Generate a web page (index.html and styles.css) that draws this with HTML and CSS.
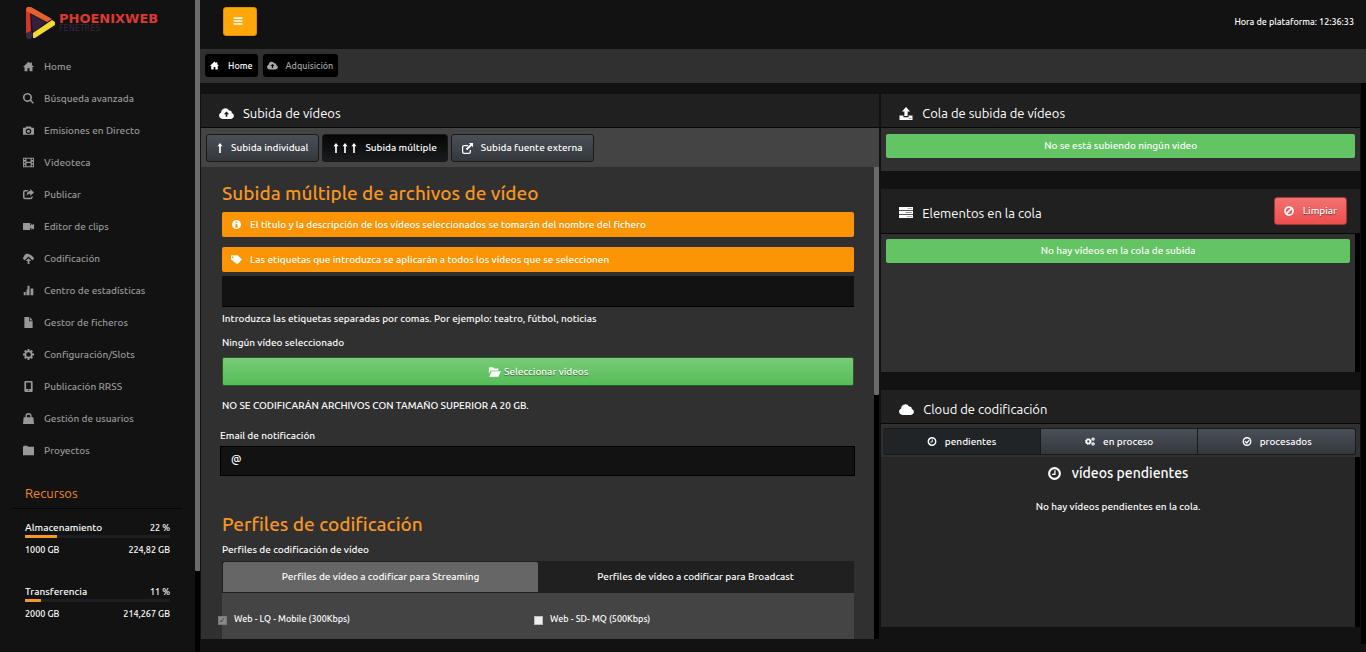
FILE: index.html
```html
<!DOCTYPE html>
<html lang="es">
<head>
<meta charset="utf-8">
<title>PhoenixWeb</title>
<link rel="stylesheet" href="styles.css">
</head>
<body>
<svg class="sprite" aria-hidden="true">
  <symbol id="i-home" viewBox="0 0 16 16"><path d="M8 1 0 8.600h2.200V15h4.300v-4.500h3V15h4.300V8.600H16L13 5.700V2h-2v1.800z"/></symbol>
  <symbol id="i-search" viewBox="0 0 16 16"><path fill-rule="evenodd" d="M6.500 0a6.500 6.500 0 1 0 3.800 11.700l4 4 1.600-1.700-3.900-4A6.500 6.500 0 0 0 6.500 0zm0 2.300a4.200 4.200 0 1 1 0 8.400 4.200 4.200 0 0 1 0-8.400z"/></symbol>
  <symbol id="i-camera" viewBox="0 0 16 16"><path fill-rule="evenodd" d="M4.500 2h7l1 2H16v10H0V4h3.500zM8 5a4 4 0 1 0 0 8 4 4 0 0 0 0-8zm0 1.800a2.200 2.200 0 1 1 0 4.400 2.200 2.200 0 0 1 0-4.400z"/></symbol>
  <symbol id="i-film" viewBox="0 0 16 16"><path fill-rule="evenodd" d="M0 1h16v14H0zM1.300 2.500v2h2v-2zm0 4.300v2.400h2V6.800zm0 4.600v2.100h2v-2.100zM5 2.500V7h6V2.500zm0 6.300v4.700h6V8.800zm7.700-6.300v2h2v-2zm0 4.300v2.400h2V6.800zm0 4.600v2.100h2v-2.100z"/></symbol>
  <symbol id="i-share" viewBox="0 0 16 16"><path d="M8 1.500H3A3 3 0 0 0 0 4.500V12a3 3 0 0 0 3 3h8a3 3 0 0 0 3-3v-2l-2.200 1.500v.6c0 .5-.3.800-.8.800H3c-.5 0-.8-.3-.8-.8V4.500c0-.5.300-.8.800-.8h3z"/><path d="M10.500 0 16 5l-5.500 5V7C8 7 6.500 8 5.300 10 5 5.500 7.500 3 10.500 3z"/></symbol>
  <symbol id="i-video" viewBox="0 0 16 16"><path d="M0 3h10.500v3.500L12 6V4h1.500V6L16 4v8.500L13.500 11v1.500H12V10l-1.500-.5V13H0z"/></symbol>
  <symbol id="i-cloudup" viewBox="0 0 16 16"><path d="M2.500 10.500A3 3 0 0 1 1.500 5 5 5 0 0 1 10 2.500 4 4 0 0 1 13.500 5a2.800 2.800 0 0 1 0 5.500L8 5z"/><path d="m8 7.500 4 4.300H9.300V16H6.700v-4.200H4z"/></symbol>
  <symbol id="i-chart" viewBox="0 0 16 16"><path d="M1 10h3v5H1zM5 7h1.500v8H5zM6.500 1h3v14h-3zM11 5h4v10h-4z"/></symbol>
  <symbol id="i-file" viewBox="0 0 16 16"><path d="M2 0h7v6h5v10H2z"/><path d="M10 0v5h4z"/></symbol>
  <symbol id="i-cog" viewBox="0 0 16 16"><path fill-rule="evenodd" d="m6.700 0-.4 2.200-1 .4-1.900-1.300L1.600 3.100l1.300 1.900-.4 1L0 6.700v2.600l2.400.4.500 1-1.400 2 1.900 1.800 1.900-1.300 1 .4.400 2.400h2.600l.4-2.400 1-.4 2 1.300 1.800-1.800-1.400-2 .5-1 2.400-.4V6.700L13.500 6l-.4-1 1.300-1.900-1.800-1.800-2 1.300-1-.4L9.300 0zM8 4.600a3.400 3.400 0 1 1 0 6.800 3.400 3.400 0 0 1 0-6.800z"/></symbol>
  <symbol id="i-mobile" viewBox="0 0 16 16"><path fill-rule="evenodd" d="M3.500 0h9A1.500 1.500 0 0 1 14 1.500v13a1.500 1.500 0 0 1-1.500 1.500h-9A1.500 1.500 0 0 1 2 14.500v-13A1.500 1.500 0 0 1 3.500 0zM4.500 2v9.500h7V2zM7 12.700v1.600h2v-1.600z"/></symbol>
  <symbol id="i-bag" viewBox="0 0 16 16"><path fill-rule="evenodd" d="M1 6h2.500V4.500a4.500 4.500 0 0 1 9 0V6H15l1 10H0zm4.500 0h5V4.500a2.500 2.500 0 0 0-5 0z"/></symbol>
  <symbol id="i-folder" viewBox="0 0 16 16"><path d="M0 2.500 1.500 1H6l1.500 1.500H16V15H0z"/></symbol>
  <symbol id="i-bars" viewBox="0 0 16 16"><path d="M1 2h14v2.600H1zM1 6.700h14v2.600H1zM1 11.400h14V14H1z"/></symbol>
  <symbol id="i-upcloud" viewBox="0 0 18 14"><path fill-rule="evenodd" d="M4 13.500A4 4 0 0 1 2.600 5.800 5 5 0 0 1 12 3.500a3 3 0 0 1 3.400 3A3.600 3.600 0 0 1 14.500 13.500zM9 4.500 5.800 8h2.200v3h2V8h2.200z"/></symbol>
  <symbol id="i-cloud" viewBox="0 0 18 14"><path d="M4 13.500A4 4 0 0 1 2.600 5.800 5 5 0 0 1 12 3.500a3 3 0 0 1 3.400 3A3.600 3.600 0 0 1 14.500 13.500z"/></symbol>
  <symbol id="i-up" viewBox="0 0 6 12"><path d="m3 0 3 4H4v8H2V4H0z"/></symbol>
  <symbol id="i-ext" viewBox="0 0 16 16"><path d="M9 3H3a3 3 0 0 0-3 3v7a3 3 0 0 0 3 3h7a3 3 0 0 0 3-3v-3h-1.800v3c0 .7-.5 1.200-1.200 1.200H3c-.7 0-1.200-.5-1.200-1.200V6c0-.7.500-1.200 1.200-1.200h6z"/><path d="M10 0h6v6l-2-2-6.500 6.500-2-2L12 2z"/></symbol>
  <symbol id="i-info" viewBox="0 0 16 16"><path fill-rule="evenodd" d="M8 0a8 8 0 1 1 0 16A8 8 0 0 1 8 0zM6.500 2.700v2.300h3V2.700zM5.500 6.500v1.700h1v3.300h-1v1.700h5v-1.700h-1v-5z"/></symbol>
  <symbol id="i-tags" viewBox="0 0 18 14"><path fill-rule="evenodd" d="M0 1.500A1.500 1.500 0 0 1 1.500 0H11l7 7-6.500 7H9L0 7zM3 1.600a1.400 1.400 0 1 0 0 2.800 1.400 1.400 0 0 0 0-2.800z"/></symbol>
  <symbol id="i-open" viewBox="0 0 18 14"><path d="M1 9V2l1-1.500h5L8 2h6.500v3H4z"/><path d="M5 6h13l-3.500 7.500h-13z"/></symbol>
  <symbol id="i-upload" viewBox="0 0 16 16"><path d="m8 0 5 5.500h-3V11H6V5.500H3z"/><path fill-rule="evenodd" d="M0 10.500h4.800v2h6.400v-2H16V16H0zm11.500 3.300v1h1v-1zm2 0v1h1v-1z"/></symbol>
  <symbol id="i-server" viewBox="0 0 18 14"><path d="M0 0h18v4H0zM0 5h18v4H0zM0 10h18v4H0z"/><path fill="#999" d="M11 1.500h6v1h-6zM8 6.500h9v1H8zM10 11.500h7v1h-7z"/></symbol>
  <symbol id="i-ban" viewBox="0 0 16 16"><g fill="none" stroke="currentColor" stroke-width="2.600"><circle cx="8" cy="8" r="6.500"/><path d="m3.500 12.500 9-9"/></g></symbol>
  <symbol id="i-clock" viewBox="0 0 16 16"><g fill="none" stroke="currentColor" stroke-width="2.600"><circle cx="8" cy="8" r="6.600"/><path stroke-width="1.600" d="M8.500 4v5H5"/></g></symbol>
  <symbol id="i-cogs" viewBox="0 0 18 16"><g fill="none" stroke="currentColor"><circle cx="6" cy="8" r="3.600" stroke-width="3"/><circle cx="6" cy="8" r="5.400" stroke-width="1.400" stroke-dasharray="2.200 2.040"/><circle cx="14.500" cy="3.700" r="2" stroke-width="2.200"/><circle cx="14.500" cy="12.300" r="2" stroke-width="2.200"/></g></symbol>
  <symbol id="i-check" viewBox="0 0 16 16"><g fill="none" stroke="currentColor" stroke-width="2.400"><circle cx="8" cy="8" r="6.700"/><path d="m4.500 7.500 3 3 4.500-5"/></g></symbol>
</svg>

<div class="app">
  <aside class="sidebar">
    <a class="logo" href="#">
      <svg class="logo-mark" viewBox="0 0 32 34" aria-hidden="true">
        <path fill="#32203c" d="m6 8 15 8L8 27z"/>
        <path fill="#3b2746" d="M1 25h5l2 3-2 5H3l-2-2z"/>
        <path fill="#d8342a" d="m1 2 4 2 1 21-5 2z"/>
        <path fill="#e4622a" d="M2 1h4l21 12-5 3L5 7 1 5z"/>
        <path fill="#f6d92d" d="m27 14 3 2v3L10 32H8v-5z"/>
      </svg>
      <span class="logo-text"><strong>PHOENIXWEB</strong><small>FENETRES</small></span>
    </a>
    <nav class="menu">
      <a href="#"><svg><use href="#i-home"/></svg>Home</a>
      <a href="#"><svg><use href="#i-search"/></svg>Búsqueda avanzada</a>
      <a href="#"><svg><use href="#i-camera"/></svg>Emisiones en Directo</a>
      <a href="#"><svg><use href="#i-film"/></svg>Videoteca</a>
      <a href="#"><svg><use href="#i-share"/></svg>Publicar</a>
      <a href="#"><svg><use href="#i-video"/></svg>Editor de clips</a>
      <a href="#"><svg><use href="#i-cloudup"/></svg>Codificación</a>
      <a href="#"><svg><use href="#i-chart"/></svg>Centro de estadísticas</a>
      <a href="#"><svg><use href="#i-file"/></svg>Gestor de ficheros</a>
      <a href="#"><svg><use href="#i-cog"/></svg>Configuración/Slots</a>
      <a href="#"><svg><use href="#i-mobile"/></svg>Publicación RRSS</a>
      <a href="#"><svg><use href="#i-bag"/></svg>Gestión de usuarios</a>
      <a href="#"><svg><use href="#i-folder"/></svg>Proyectos</a>
    </nav>
    <section class="resources">
      <h2>Recursos</h2>
      <div class="resource">
        <div class="row"><span>Almacenamiento</span><b>22 %</b></div>
        <div class="bar"><i style="width:22%"></i></div>
        <div class="row small"><b>1000 GB</b><b>224,82 GB</b></div>
      </div>
      <div class="resource">
        <div class="row"><span>Transferencia</span><b>11 %</b></div>
        <div class="bar"><i style="width:11%"></i></div>
        <div class="row small"><b>2000 GB</b><b>214,267 GB</b></div>
      </div>
    </section>
  </aside>
  <div class="track track-page"><i></i></div>

  <div class="main">
    <header class="topbar">
      <button class="toggle" type="button" aria-label="Menú"><svg><use href="#i-bars"/></svg></button>
      <span class="time">Hora de plataforma: 12:36:33</span>
    </header>
    <nav class="crumbs">
      <a class="current" href="#"><svg><use href="#i-home"/></svg>Home</a>
      <a href="#"><svg><use href="#i-upcloud"/></svg>Adquisición</a>
    </nav>
    <div class="body">
      <main class="columns">
        <section class="panel">
          <h2 class="panel-head"><svg class="wide"><use href="#i-upcloud"/></svg>Subida de vídeos</h2>
          <div class="tabs">
            <button type="button"><svg class="arrow"><use href="#i-up"/></svg>Subida individual</button>
            <button type="button" class="active"><span class="arrows"><svg class="arrow"><use href="#i-up"/></svg><svg class="arrow"><use href="#i-up"/></svg><svg class="arrow"><use href="#i-up"/></svg></span>Subida múltiple</button>
            <button type="button"><svg><use href="#i-ext"/></svg>Subida fuente externa</button>
          </div>
          <div class="scroller">
            <form class="form">
              <h3>Subida múltiple de archivos de vídeo</h3>
              <p class="alert warn"><svg><use href="#i-info"/></svg>El título y la descripción de los vídeos seleccionados se tomarán del nombre del fichero</p>
              <p class="alert warn second"><svg><use href="#i-tags"/></svg>Las etiquetas que introduzca se aplicarán a todos los vídeos que se seleccionen</p>
              <input class="field" type="text" id="tags">
              <label class="line" for="tags">Introduzca las etiquetas separadas por comas. Por ejemplo: teatro, fútbol, noticias</label>
              <p class="line">Ningún vídeo seleccionado</p>
              <button class="select-btn" type="button"><svg><use href="#i-open"/></svg>Seleccionar vídeos</button>
              <p class="notice">NO SE CODIFICARÁN ARCHIVOS CON TAMAÑO SUPERIOR A 20 GB.</p>
              <label class="email-label" for="email">Email de notificación</label>
              <div class="email"><span>@</span><input type="text" id="email"></div>
              <h3 class="profiles-title">Perfiles de codificación</h3>
              <p class="line profiles-sub">Perfiles de codificación de vídeo</p>
              <div class="profile-tabs">
                <button type="button" class="active">Perfiles de vídeo a codificar para Streaming</button>
                <button type="button">Perfiles de vídeo a codificar para Broadcast</button>
              </div>
              <div class="profiles">
                <label><input type="checkbox" checked disabled>Web - LQ - Mobile (300Kbps)</label>
                <label><input type="checkbox">Web - SD- MQ (500Kbps)</label>
              </div>
            </form>
            <div class="track track-form"><i></i></div>
          </div>
        </section>

        <aside class="queues">
          <section class="panel">
            <h2 class="panel-head"><svg><use href="#i-upload"/></svg>Cola de subida de vídeos</h2>
            <div class="pane"><p class="alert ok">No se está subiendo ningún video</p></div>
          </section>
          <section class="panel">
            <h2 class="panel-head tall"><svg><use href="#i-server"/></svg>Elementos en la cola
              <button class="clear" type="button"><svg><use href="#i-ban"/></svg>Limpiar</button></h2>
            <div class="scroller">
              <div class="pane list"><p class="alert ok">No hay vídeos en la cola de subida</p></div>
              <div class="track"></div>
            </div>
          </section>
          <section class="panel">
            <h2 class="panel-head"><svg class="wide"><use href="#i-cloud"/></svg>Cloud de codificación</h2>
            <div class="segments">
              <button type="button" class="active"><svg><use href="#i-clock"/></svg>pendientes</button>
              <button type="button"><svg><use href="#i-cogs"/></svg>en proceso</button>
              <button type="button"><svg><use href="#i-check"/></svg>procesados</button>
            </div>
            <div class="scroller">
              <div class="pending">
                <h3><svg><use href="#i-clock"/></svg>vídeos pendientes</h3>
                <p>No hay vídeos pendientes en la cola.</p>
              </div>
              <div class="track"></div>
            </div>
          </section>
        </aside>
      </main>
      <div class="track track-body"></div>
    </div>
  </div>
</div>
</body>
</html>
```

FILE: styles.css
```css
* { box-sizing: border-box; }
body {
  margin: 0;
  background: #121212;
  color: #fff;
  font: 500 10px/16px Ubuntu, "Noto Sans", sans-serif;
}
h2, h3, p { margin: 0; font-weight: 400; }
p { font-weight: 500; }
a { color: inherit; text-decoration: none; }
button, input { font: inherit; color: inherit; margin: 0; }
button { border: 0; padding: 0; }
svg { width: 11px; height: 11px; fill: currentColor; flex: none; }
.sprite { position: absolute; width: 0; height: 0; }

.app { display: flex; min-height: 100vh; }
.main { flex: 1; min-width: 0; display: flex; flex-direction: column; }

.track { width: 5px; flex: none; background: #000; }
.track i { display: block; background: #6b6b6b; border-radius: 0 0 1px 1px; }
.track-page i { height: 571px; }
.track-form i { height: 228px; }

/* Sidebar */
.sidebar { width: 195px; flex: none; }
.logo { display: flex; padding: 6px 0 0 25px; height: 50px; gap: 2px; }
.logo-mark { width: 32px; height: 34px; }
.logo-text { display: flex; flex-direction: column; padding-top: 6px; font-family: "DejaVu Sans", sans-serif; }
.logo-text strong { font-size: 13px; line-height: 13px; color: #dc3932; }
.logo-text small { font-size: 8px; line-height: 8px; color: #38253f; }
.menu { display: flex; flex-direction: column; color: #989898; }
.menu a { display: flex; align-items: center; gap: 10px; height: 32px; padding: 1px 0 0 23px; }
.menu svg { margin-bottom: 1px; }
.resources { margin: 11px 13px 0; }
.resources h2 { padding: 6px 12px 5px; font-size: 13px; line-height: 20px; color: #f38b1c; border-bottom: 1px solid #050505; }
.resource { padding: 12px 12px 16px; }
.row { display: flex; justify-content: space-between; line-height: 14px; }
.row b { font-size: 9px; font-weight: 500; }
.bar { height: 3px; background: #1c1f22; }
.bar i { display: block; height: 3px; background: #f79a1c; }
.small { padding-top: 5px; }

/* Top */
.topbar { display: flex; align-items: center; justify-content: space-between; height: 49px; padding: 0 12px 6px 23px; }
.toggle { width: 34px; height: 29px; padding-right: 5px; border: 1px solid #d98f08; border-radius: 3px; background: #ffa70a; }
.toggle svg { width: 10px; height: 10px; margin-top: 3px; }
.time { font-size: 9px; }
.crumbs { display: flex; gap: 5px; padding: 5px; height: 34px; background: #303030; }
.crumbs a { display: flex; align-items: center; gap: 8px; height: 23px; padding: 0 5px 0 4px; border-radius: 3px; background: #000; color: #a5a5a5; font-size: 9px; }
.crumbs a.current { color: #fff; }
.crumbs svg { height: 9px; }

/* Content */
.body { display: flex; flex: 1; padding-bottom: 8px; }
.columns { flex: 1; min-width: 0; display: grid; grid-template-columns: 17fr 12fr; gap: 2px; padding: 11px 1px 5px; align-items: start; }
.queues { display: grid; gap: 18px; }
.panel-head { display: flex; align-items: center; gap: 9px; height: 34px; padding: 5px 13px 0 18px; font-size: 13px; line-height: 20px; background: #202020; border-bottom: 1px solid #080808; }
.panel-head svg { width: 14px; height: 13px; }
.panel-head svg.wide { width: 15px; }
.panel-head.tall { height: 45px; padding-top: 3px; }
.scroller { display: flex; }

.tabs { display: flex; gap: 3px; padding: 6px 5px 5px; background: #444; }
.tabs button { display: flex; align-items: center; justify-content: center; gap: 8px; height: 28px; padding: 0 10px; border: 1px solid #17191b; border-radius: 3px; background: linear-gradient(#4a5058, #34383c); }
.tabs button.active { background: linear-gradient(#060606, #191b1d); }
.arrows { display: flex; gap: 3px; }
.arrow { width: 6px; height: 10px; }

.form { flex: 1; min-width: 0; padding: 14px 20px 0 21px; background: #303030; }
.form h3 { font-size: 19px; font-weight: 500; line-height: 24px; color: #f89621; }
.alert { display: flex; align-items: center; height: 24px; border-radius: 2px; }
.warn { gap: 8px; height: 25px; margin-top: 7px; padding: 0 9px; background: #fb9506; }
.warn.second { margin-top: 10px; }
.warn svg { height: 9px; }
.ok { justify-content: center; background: #62c462; }
.field { display: block; width: 100%; height: 31px; margin: 4px 0; border: 0; border-bottom: 1px solid #000; background: #121212; }
.line { display: block; height: 24px; line-height: 16px; }
.select-btn { display: flex; align-items: center; justify-content: center; gap: 3px; width: 100%; height: 29px; margin: -2px 0 12px; border: 1px solid #275a27; border-radius: 2px; background: linear-gradient(#7acb7a, #55bd55); text-shadow: 0 1px 1px #3a703a; }
.select-btn svg { width: 13px; height: 10px; }
.notice { line-height: 16px; margin-bottom: 14px; }
.email-label { display: block; margin-left: -2px; line-height: 16px; }
.email { display: flex; margin: 2px -1px 36px -2px; background: #121212; border: 1px solid #000; }
.email span { width: 30px; padding-left: 10px; font-size: 11px; line-height: 24px; }
.email input { flex: 1; min-width: 0; height: 28px; border: 0; background: none; }
.profiles-title { margin-bottom: 6px; }
.form .profiles-sub { height: 19px; }
.profile-tabs { display: grid; grid-template-columns: 1fr 1fr; padding: 1px; background: #202020; }
.profile-tabs button { height: 30px; background: #202020; }
.profile-tabs .active { background: #666; border-radius: 2px 2px 0 0; }
.profiles { display: grid; grid-template-columns: 1fr 1fr; height: 46px; padding-top: 18px; background: #444; font-size: 9px; }
.profiles label { display: flex; align-items: flex-start; gap: 7px; margin-left: -4px; }
.profiles input { appearance: none; width: 9px; height: 9px; margin-top: 5px; background: #eee; border: 1px solid #bbb; }
.profiles input:checked { background: #8a8a8a; border-color: #777; }
.profiles input:checked::before { content: "✓"; display: block; color: #333; font: 700 8px/7px "DejaVu Sans", sans-serif; }

/* Queues */
.pane { flex: 1; padding: 6px 5px 13px; background: #303030; }
.pane.list { min-height: 138px; padding-top: 5px; }
.clear { display: flex; align-items: center; gap: 9px; height: 28px; margin: -3px 0 0 auto; padding: 0 9px; border: 1px solid #a73535; border-radius: 3px; background: linear-gradient(#f27171, #ee4f4f); font-size: 10px; font-weight: 500; text-shadow: 0 1px 1px #8a3030; }
.panel-head .clear svg { width: 10px; height: 10px; }
.segments { display: grid; grid-template-columns: 1fr 1fr 1fr; padding: 4px 4px 2px 2px; background: #303030; }
.segments button { display: flex; align-items: center; justify-content: center; gap: 8px; height: 27px; border: 1px solid #17191b; border-left-width: 0; background: linear-gradient(#4a5058, #34383c); }
.segments .active { background: #202426; border-radius: 3px 0 0 3px; }
.segments button:last-child { border-radius: 0 3px 3px 0; }
.segments svg { width: 10px; height: 9px; }
.pending { flex: 1; min-height: 170px; padding-top: 6px; background: #272727; text-align: center; }
.pending h3 { display: flex; align-items: center; justify-content: center; gap: 11px; font-size: 14px; line-height: 20px; font-weight: 500; }
.pending h3 svg { width: 13px; height: 13px; }
.pending p { margin-top: 16px; }
```
